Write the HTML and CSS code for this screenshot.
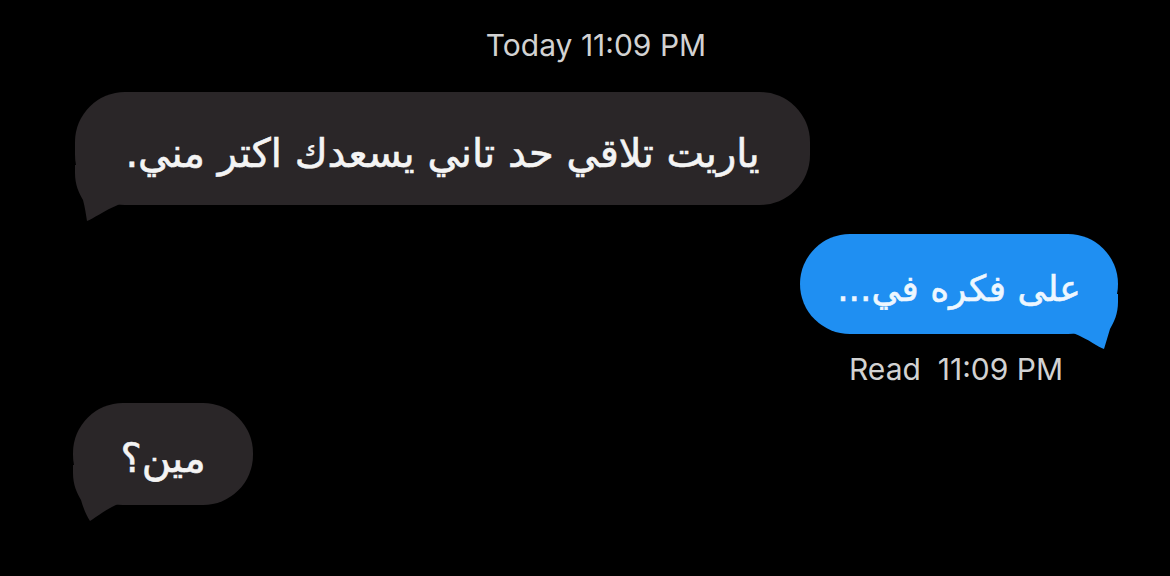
FILE: index.html
```html
<!DOCTYPE html>
<html lang="ar">
<head>
  <meta charset="UTF-8">
  <title>Messages</title>
  <link rel="stylesheet" href="styles.css">
</head>
<body>
  <div class="chat">
    <div class="stamp">Today 11:09 PM</div>

    <div class="row row-in first">
      <div class="bubble bubble-in wide">
        <span dir="rtl">ياريت تلاقي حد تاني يسعدك اكتر مني.</span>
        <svg class="tail tail-in" width="60" height="60" viewBox="0 0 60 60">
          <path d="M0 0 L0 8 C0 20 4 28 8 35 C10 42 11 50 12 56 C18 54 28 46 45 39 L45 0 Z" fill="#2a2628"/>
        </svg>
      </div>
    </div>

    <div class="row row-out">
      <div class="bubble bubble-out">
        <span dir="rtl">على فكره في...</span>
        <svg class="tail tail-out" width="60" height="60" viewBox="0 0 60 60">
          <path d="M0 0 L0 8 C0 20 4 28 8 35 C10 42 12 48 14 55 C20 53 28 46 45 39 L45 0 Z" fill="#1f8ff2"/>
        </svg>
      </div>
    </div>
    <div class="read">Read&nbsp; 11:09 PM</div>

    <div class="row row-in last">
      <div class="bubble bubble-in small">
        <span dir="rtl">مين؟</span>
        <svg class="tail tail-in" width="60" height="60" viewBox="0 0 60 60">
          <path d="M0 0 L0 8 C0 20 4 28 8 35 C10 42 13 50 17 56 C22 53 30 46 45 39 L45 0 Z" fill="#2a2628"/>
        </svg>
      </div>
    </div>
  </div>
</body>
</html>
```

FILE: styles.css
```css
body {
  margin: 0;
  background: #000;
  font-family: "DejaVu Sans", "Noto Sans", sans-serif;
  overflow: hidden;
}
.chat {
  width: 1170px;
  height: 576px;
  display: flex;
  flex-direction: column;
}
.stamp {
  margin-top: 27px;
  line-height: 36px;
  text-align: center;
  padding-left: 22px;
  font-family: "Inter", "Liberation Sans", sans-serif;
  font-size: 30px;
  color: #d2d2d2;
}
.row {
  display: flex;
}
.row-in {
  justify-content: flex-start;
  padding-left: 75px;
}
.row-out {
  justify-content: flex-end;
  padding-right: 52px;
  margin-top: 29px;
}
.first {
  margin-top: 29px;
}
.last {
  margin-top: 16px;
  padding-left: 73px;
}
.bubble {
  position: relative;
  display: flex;
  align-items: center;
  justify-content: center;
  border-radius: 50px;
  font-size: 40px;
  color: #f4f4f4;
  -webkit-text-stroke: 0.6px currentColor;
}
.bubble span {
  position: relative;
  z-index: 1;
  margin-top: 8px;
}
.bubble-in {
  background: #2a2628;
}
.bubble-out {
  background: #1f8ff2;
  color: #eef7ff;
  font-size: 36px;
  width: 318px;
  height: 100px;
}
.wide {
  width: 735px;
  height: 113px;
}
.small {
  width: 180px;
  height: 102px;
}
.tail {
  position: absolute;
  bottom: -20px;
}
.tail-in {
  left: 0;
}
.tail-out {
  right: 0;
  transform: scaleX(-1);
}
.read {
  margin-top: 17px;
  line-height: 36px;
  padding-right: 107px;
  text-align: right;
  font-family: "Inter", "Liberation Sans", sans-serif;
  font-size: 30px;
  color: #d2d2d2;
}
```
